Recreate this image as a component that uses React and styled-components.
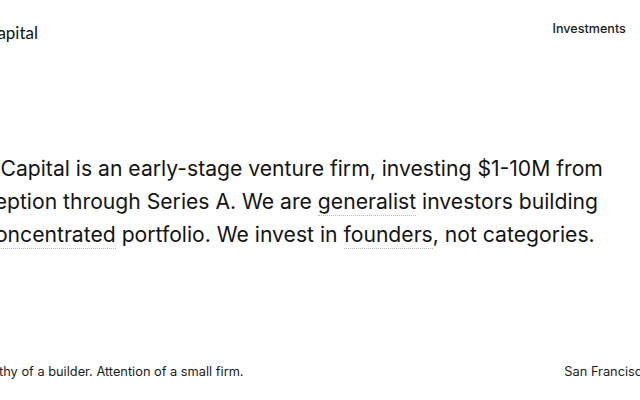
import styled, { createGlobalStyle } from "styled-components";

const GlobalStyle = createGlobalStyle`
  html, body {
    margin: 0;
    padding: 0;
    background: #ffffff;
    overflow: hidden;
  }
  body {
    font-family: Inter, "Noto Sans", sans-serif;
    color: #141414;
    -webkit-font-smoothing: antialiased;
  }
`;

function App() {
  return (
    <>
      <GlobalStyle />
      <Viewport>
        <Page>
          <Header>
            <Logo href="#">Ivy Capital</Logo>
            <Nav>
              <NavLink href="#">Investments</NavLink>
              <NavLink href="#">Team</NavLink>
            </Nav>
          </Header>

          <Main>
            <Statement>
              Ivy Capital is an early-stage venture firm, investing $1-10M from
              inception through Series A. We are <Term>generalist</Term> investors
              building a <Term>concentrated</Term> portfolio. We invest in{" "}
              <Term>founders</Term>, not categories.
            </Statement>
          </Main>

          <Footer>
            <FooterText>Empathy of a builder. Attention of a small firm.</FooterText>
            <FooterText>San Francisco, CA</FooterText>
          </Footer>
        </Page>
      </Viewport>
    </>
  );
}

const Viewport = styled.div`
  width: 100vw;
  height: 100vh;
  display: flex;
  justify-content: center;
  overflow: hidden;
`;

const Page = styled.div`
  flex: 0 0 710px;
  width: 710px;
  height: 100%;
  display: flex;
  flex-direction: column;
`;

const Header = styled.header`
  display: flex;
  justify-content: space-between;
  align-items: flex-start;
  padding-top: 21px;
`;

const Logo = styled.a`
  font-family: Lato, "Noto Sans", sans-serif;
  font-size: 17px;
  line-height: 20px;
  word-spacing: -5px;
  margin-top: 2px;
  color: #111;
  text-decoration: none;
`;

const Nav = styled.nav`
  display: flex;
  gap: 16px;
`;

const NavLink = styled.a`
  font-size: 12.6px;
  line-height: 16px;
  font-weight: 500;
  color: #1a1a1a;
  text-decoration: none;
`;

const Main = styled.main`
  flex: 1;
  display: flex;
  align-items: center;
  padding-bottom: 4px;
`;

const Statement = styled.p`
  margin: 0;
  max-width: 648px;
  font-size: 21.15px;
  line-height: 33px;
  color: #141414;
`;

const Term = styled.span`
  border-bottom: 1px dotted #b8b8b8;
  padding-bottom: 1px;
`;

const Footer = styled.footer`
  display: flex;
  justify-content: space-between;
  padding-bottom: 20px;
`;

const FooterText = styled.span`
  font-size: 12.8px;
  line-height: 16px;
  color: #1a1a1a;
`;

export default App;
